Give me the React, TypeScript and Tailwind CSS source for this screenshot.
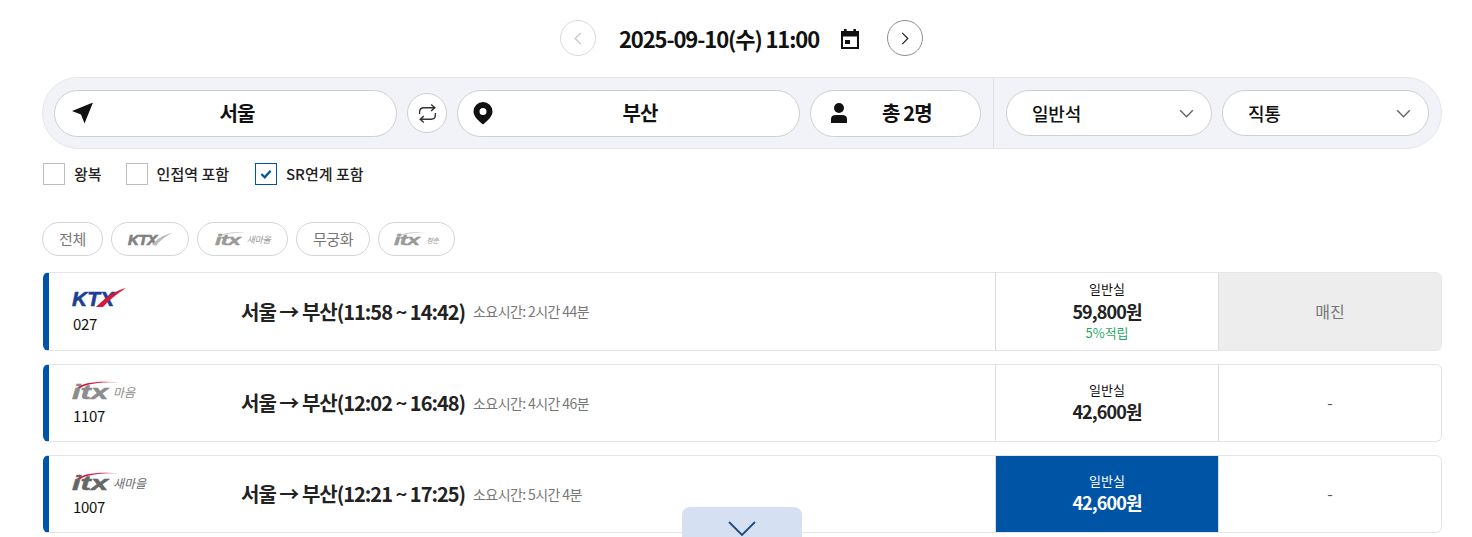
import React from "react";

const Chevron = ({ className = "", stroke = "#555" }: { className?: string; stroke?: string }) => (
  <svg viewBox="0 0 16 10" className={className} fill="none" stroke={stroke} strokeWidth="1.6">
    <path d="M1 1.5 8 8.5 15 1.5" />
  </svg>
);

const Ktx = ({ gray = false }: { gray?: boolean }) =>
  gray ? (
    <span className="relative inline-block h-[13px] w-[44px]">
      <span className="absolute top-0 left-0 font-['Liberation_Sans',sans-serif] text-[15px] leading-[13px] font-bold italic text-[#808080] [-webkit-text-stroke:0.7px_#808080]">KTX</span>
      <svg viewBox="0 0 44 13" className="absolute top-0 left-0 h-[13px] w-[44px]">
        <path d="M24 12C29 6 35 2 44 0 38 3 33 7 28 12Z" fill="#bbb" />
      </svg>
    </span>
  ) : (
    <span className="relative inline-block h-[20px] w-[54px]">
      <span className="absolute top-[2px] left-0 font-['Liberation_Sans',sans-serif] text-[21px] leading-[18px] font-bold italic text-[#1c3f94] [-webkit-text-stroke:0.6px_#1c3f94]">KTX</span>
      <svg viewBox="0 0 54 20" className="absolute top-0 left-0 h-[20px] w-[54px]">
        <path d="M24 19C33 10 42 3 54 0 46 5 38 11 31 19Z" fill="#d7173f" />
      </svg>
    </span>
  );

const Itx = ({ sub, subClass, color = "#8c8c8c", swoosh = "#d7173f", small = false }: { sub: string; subClass: string; color?: string; swoosh?: string; small?: boolean }) =>
  small ? (
    <span className="relative flex h-[14px] items-end">
      <svg viewBox="0 0 34 6" className="absolute top-0 left-[2px] h-[5px] w-[30px]">
        <path d="M0 6C6 1 18-.5 34 1 20 1 8 2 3 6Z" fill={swoosh} />
      </svg>
      <span className="w-[29px] origin-bottom-left scale-x-[1.55] font-['Liberation_Sans',sans-serif] text-[15px] leading-[12px] font-bold italic [-webkit-text-stroke:0.4px_currentColor]" style={{ color }}>itx</span>
      <span className={`ml-[3px] font-['Noto_Sans_CJK_KR',sans-serif] italic ${subClass}`} style={{ color }}>{sub}</span>
    </span>
  ) : (
    <span className="relative flex h-[19px] items-end">
      <svg viewBox="0 0 48 8" className="absolute top-0 left-[2px] h-[7px] w-[48px]">
        <path d="M0 8C6 2 24-.5 48 1.500 28 1 10 3 4 8Z" fill={swoosh} />
      </svg>
      <span className="w-[38px] origin-bottom-left scale-x-[1.55] font-['Liberation_Sans',sans-serif] text-[20px] leading-[15px] font-bold italic [-webkit-text-stroke:0.5px_currentColor]" style={{ color }}>itx</span>
      <span className={`ml-[3px] font-['Noto_Sans_CJK_KR',sans-serif] italic ${subClass}`} style={{ color }}>{sub}</span>
    </span>
  );

const Check = ({ label, checked = false }: { label: string; checked?: boolean }) => (
  <div className="flex items-center">
    <span className={`flex h-[22px] w-[22px] items-center justify-center border bg-white ${checked ? "border-[#0054a6]" : "border-[#bdbdbd]"}`}>
      {checked && (
        <svg viewBox="0 0 14 12" className="h-[10px] w-[12px]" fill="none" stroke="#0054a6" strokeWidth="2.6">
          <path d="M1.5 6 5.5 10 12.5 2" />
        </svg>
      )}
    </span>
    <span className="ml-[9px] text-[15px] leading-[22px] font-medium text-[#222]">{label}</span>
  </div>
);

const Chip = ({ w, children }: { w: string; children: React.ReactNode }) => (
  <div className={`flex h-[34px] items-center justify-center rounded-full border border-[#d5d5d5] bg-white text-[15px] tracking-[-0.4px] text-[#777] ${w}`}>{children}</div>
);

const Field = ({ w, icon, label }: { w: string; icon: React.ReactNode; label: string }) => (
  <div className={`relative flex h-[47px] items-center justify-center rounded-full border border-[#cfcfcf] bg-white pl-[23px] text-[20px] font-bold tracking-[-0.8px] whitespace-nowrap text-[#111] ${w}`}>
    <span className="absolute top-1/2 left-[17px] -translate-y-1/2">{icon}</span>
    {label}
  </div>
);

const Select = ({ w, label }: { w: string; label: string }) => (
  <div className={`flex h-[46px] items-center justify-between rounded-full border border-[#cfcfcf] bg-white pr-[17px] pl-[25px] text-[18px] font-medium tracking-[-0.2px] text-[#111] ${w}`}>
    <span>{label}</span>
    <Chevron className="h-[9px] w-[15px]" stroke="#666" />
  </div>
);

const Row = ({ h, logo, no, time, dur, price, extra, selected, sold }: { h: string; logo: React.ReactNode; no: string; time: string; dur: string; price: string; extra?: string; selected?: boolean; sold?: boolean }) => (
  <div className={`flex overflow-hidden rounded-[6px] border border-l-[6px] border-[#e6e6e6] border-l-[#0054a6] bg-white ${h}`}>
    <div className="flex w-[168px] flex-col pt-[15px] pl-[23px]">
      <div className="flex h-[20px] items-end">{logo}</div>
      <div className="mt-[5px] pl-[1px] text-[15px] leading-[22px] tracking-[-0.3px] text-[#111]">{no}</div>
    </div>
    <div className="flex w-[778px] items-center pl-[24px]">
      <span className="text-[20px] font-bold tracking-[-1px] text-[#222]">서울 → 부산({time})</span>
      <span className="ml-[8px] text-[14px] tracking-[-0.6px] text-[#777]">소요시간: {dur}</span>
    </div>
    <div className={`flex w-[223px] flex-col items-center justify-center border-l border-[#dcdcdc] ${selected ? "bg-[#0054a6] text-white" : "text-[#222]"} ${extra ? "" : "pb-[2px]"}`}>
      <span className={`text-[13px] leading-[18px] ${selected ? "text-white" : "text-[#111]"}`}>일반실</span>
      <span className={`text-[18px] leading-[24px] font-bold tracking-[-0.9px] ${extra ? "mt-[1px]" : ""}`}>{price}</span>
      {extra && <span className="text-[13px] leading-[20px] text-[#1fa865]">{extra}</span>}
    </div>
    <div className={`flex flex-1 items-center justify-center border-l border-[#dcdcdc] pb-[2px] text-[16px] ${sold ? "bg-[#ededed] text-[#777]" : "text-[#555]"}`}>{sold ? "매진" : "-"}</div>
  </div>
);

export default function App() {
  return (
    <div className="relative h-[537px] w-[1472px] overflow-hidden bg-white font-['Noto_Sans_CJK_KR','Noto_Sans',sans-serif]">
      <div className="flex h-[77px] items-start justify-center pt-[20px] pl-[11px]">
        <div className="flex h-[36px] w-[36px] items-center justify-center rounded-full border border-[#d9d9d9]">
          <svg viewBox="0 0 10 16" className="h-[13px] w-[8px]" fill="none" stroke="#c4c4c4" strokeWidth="1.5"><path d="M8.5 1 1.5 8 8.5 15" /></svg>
        </div>
        <div className="ml-[23px] text-[22px] leading-[36px] font-bold tracking-[-1.1px] whitespace-nowrap text-[#111]">2025-09-10(수) 11:00</div>
        <svg viewBox="0 0 22 22" className="mt-[8px] ml-[20px] h-[22px] w-[22px]">
          <path fillRule="evenodd" d="M5 1h2.6v2h6.800V1H17v2h3v18H2V3h3ZM4 8.500V19h14V8.500ZM6 12h5v4H6Z" fill="#111" />
        </svg>
        <div className="ml-[26px] flex h-[36px] w-[36px] items-center justify-center rounded-full border border-[#8f8f8f]">
          <svg viewBox="0 0 10 16" className="h-[13px] w-[8px]" fill="none" stroke="#222" strokeWidth="1.5"><path d="M1.5 1 8.500 8 1.5 15" /></svg>
        </div>
      </div>

      <div className="ml-[42px] flex h-[72px] w-[1400px] items-center rounded-full border border-[#e5e6ea] bg-[#f2f3f8]">
        <div className="flex items-center gap-[10px] pl-[11px]">
          <Field w="w-[343px]" label="서울" icon={
            <svg viewBox="0 0 21 21" className="h-[21px] w-[21px]"><path d="M21 0 0 8.500l9 3.500 3.500 9Z" fill="#111" /></svg>
          } />
          <div className="flex h-[40px] w-[40px] items-center justify-center rounded-full border border-[#cfcfcf] bg-white">
            <svg viewBox="0 0 20 20" className="h-[21px] w-[21px]" fill="none" stroke="#333" strokeWidth="1.3">
              <path d="M13.500 1.500 17 4.500l-3.500 3M17 4.500H6.500Q2.500 4.500 2.500 8.500v2" />
              <path d="M6.500 18.500 3 15.500l3.500-3M3 15.500h10.500q4 0 4-4v-2" />
            </svg>
          </div>
          <Field w="w-[343px]" label="부산" icon={
            <svg viewBox="0 0 20 24" className="ml-[-2px] h-[24px] w-[20px]"><path fillRule="evenodd" d="M10 1a9.500 9.500 0 0 1 9.500 9.500C19.500 16 14 20 10 23.500 6 20 .5 16 .5 10.500A9.500 9.500 0 0 1 10 1Zm0 6a3.500 3.500 0 1 0 0 7 3.500 3.500 0 0 0 0-7Z" fill="#111" /></svg>
          } />
          <Field w="w-[171px]" label="총 2명" icon={
            <svg viewBox="0 0 18 22" className="ml-[2px] h-[22px] w-[18px]"><circle cx="9" cy="6" r="5" fill="#111" /><path d="M1 21v-4q0-4 5-4h6q5 0 5 4v4Z" fill="#111" /></svg>
          } />
        </div>
        <div className="ml-[12px] h-full w-px bg-[#dfe0e4]" />
        <div className="ml-[12px] flex items-center gap-[10px]">
          <Select w="w-[206px]" label="일반석" />
          <Select w="w-[207px]" label="직통" />
        </div>
      </div>

      <div className="mt-[14px] ml-[43px] flex h-[22px]">
        <Check label="왕복" />
        <div className="ml-[24px]"><Check label="인접역 포함" /></div>
        <div className="ml-[26px]"><Check checked label="SR연계 포함" /></div>
      </div>

      <div className="mt-[37px] ml-[42px] flex gap-[8px]">
        <Chip w="w-[61px]">전체</Chip>
        <Chip w="w-[78px]"><Ktx gray /></Chip>
        <Chip w="w-[91px]"><Itx small sub="새마을" subClass="text-[9px] leading-[12px] tracking-[-0.3px]" color="#999" swoosh="#ccc" /></Chip>
        <Chip w="w-[74px]">무궁화</Chip>
        <Chip w="w-[77px]"><Itx small sub="청춘" subClass="text-[7px] leading-[12px]" color="#999" swoosh="#ccc" /></Chip>
      </div>

      <div className="mt-[16px] ml-[43px] flex w-[1399px] flex-col gap-[13px]">
        <Row h="h-[79px]" logo={<Ktx />} no="027" time="11:58 ~ 14:42" dur="2시간 44분" price="59,800원" extra="5%적립" sold />
        <Row h="h-[78px]" logo={<Itx sub="마음" subClass="text-[12px] leading-[16px]" />} no="1107" time="12:02 ~ 16:48" dur="4시간 46분" price="42,600원" />
        <Row h="h-[78px]" logo={<Itx sub="새마을" subClass="text-[12px] leading-[16px]" color="#666" />} no="1007" time="12:21 ~ 17:25" dur="5시간 4분" price="42,600원" selected />
      </div>

      <div className="absolute bottom-0 left-[682px] flex h-[30px] w-[120px] items-start justify-center rounded-t-[8px] bg-[#d5e1f3] pt-[14px]">
        <svg viewBox="0 0 28 15" className="h-[15px] w-[28px]" fill="none" stroke="#1f4a80" strokeWidth="1.8"><path d="M1 1 14 14 27 1" /></svg>
      </div>
      <div className="absolute bottom-0 left-[1338px] h-[4px] w-[44px] bg-white" />
    </div>
  );
}
